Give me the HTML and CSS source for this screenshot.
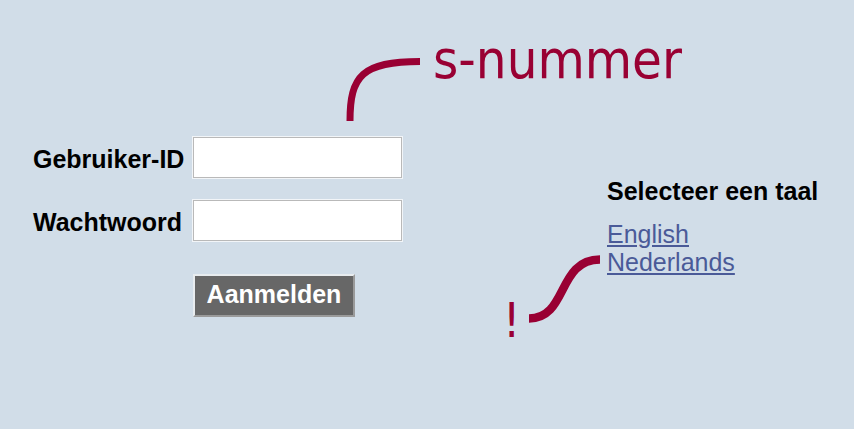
FILE: index.html
```html
<!DOCTYPE html>
<html lang="nl">
<head>
<meta charset="utf-8">
<title>Aanmelden</title>
<link rel="stylesheet" href="styles.css">
</head>
<body>
<div class="page">
  <form class="login">
    <label class="label" for="uid">Gebruiker-ID</label>
    <input class="field" id="uid" type="text">
    <label class="label" for="pw">Wachtwoord</label>
    <input class="field" id="pw" type="password">
    <div class="actions">
      <button class="submit" type="button">Aanmelden</button>
    </div>
  </form>
  <aside class="lang">
    <h2 class="lang-title">Selecteer een taal</h2>
    <a class="lang-link" href="#">English</a>
    <a class="lang-link" href="#">Nederlands</a>
  </aside>

  <svg class="curve curve-id" width="80" height="70" viewBox="340 55 80 70" aria-hidden="true">
    <path d="M350 121 C350 76 362 61.5 420 61.5" fill="none" stroke="#990033" stroke-width="7"/>
  </svg>
  <span class="note note-id">s-nummer</span>

  <svg class="curve curve-lang" width="75" height="70" viewBox="527 254 75 70" aria-hidden="true">
    <path d="M529 318.5 C568 318.5 557 259.5 600 259.5" fill="none" stroke="#990033" stroke-width="8.5"/>
  </svg>
  <span class="note note-lang">!</span>
</div>
</body>
</html>
```

FILE: styles.css
```css
html, body {
  margin: 0;
  padding: 0;
  background: #d1dde8;
}

.page {
  position: relative;
  width: 854px;
  height: 429px;
  overflow: hidden;
  display: flex;
  align-items: flex-start;
  padding: 137px 0 0 33px;
  box-sizing: border-box;
  font-family: "Liberation Sans", Arial, sans-serif;
  font-size: 25px;
  line-height: 28px;
  color: #000;
}

.login {
  display: grid;
  grid-template-columns: 150px 209px;
  column-gap: 10px;
  row-gap: 22px;
  align-items: center;
  margin: 0;
}

.label {
  font-weight: bold;
  white-space: nowrap;
  padding-top: 2px;
}

.field {
  box-sizing: border-box;
  width: 209px;
  height: 41px;
  margin: 0;
  background: #fff;
  border: 1px solid #b9b9b9;
  outline: 1px solid #f2f5f8;
  outline-offset: 0;
  font: inherit;
  padding: 0 6px;
}

.actions {
  grid-column: 2;
  margin-top: 11px;
}

.submit {
  box-sizing: border-box;
  width: 162px;
  height: 43px;
  margin: 0;
  padding: 0 0 4px;
  background: #676767;
  color: #fff;
  font-family: "Liberation Sans", Arial, sans-serif;
  font-weight: bold;
  font-size: 25px;
  line-height: 28px;
  border: 2px solid;
  border-color: #e8ecef #9a9a9a #9a9a9a #e8ecef;
}

.lang {
  display: flex;
  flex-direction: column;
  align-items: flex-start;
  margin-left: 205px;
  padding-top: 40px;
}

.lang-title {
  margin: 0 0 15px;
  font-size: 25px;
  line-height: 28px;
  font-weight: bold;
  white-space: nowrap;
}

.lang-link {
  color: #4a5a98;
  text-decoration: underline;
  text-underline-offset: 2px;
}

.curve {
  position: absolute;
  display: block;
}

.curve-id {
  left: 340px;
  top: 55px;
}

.curve-lang {
  left: 527px;
  top: 254px;
}

.note {
  position: absolute;
  color: #990033;
  font-family: "DejaVu Sans Condensed", "DejaVu Sans", sans-serif;
  font-stretch: condensed;
  line-height: 1;
  white-space: nowrap;
}

.note-id {
  left: 433px;
  top: 33px;
  font-size: 54px;
}

.note-lang {
  left: 503px;
  top: 296px;
  font-size: 48px;
}
```
